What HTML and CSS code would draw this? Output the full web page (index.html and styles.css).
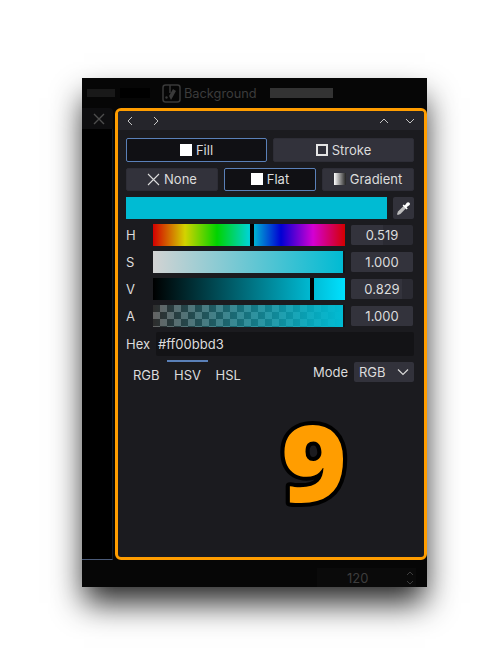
FILE: index.html
```html
<!DOCTYPE html>
<html lang="en">
<head>
    <meta charset="UTF-8">
    <meta name="viewport" content="width=device-width, initial-scale=1.0">
    <title>Color Picker</title>
    <link rel="stylesheet" href="styles.css">
</head>
<body>
    <div class="window">
        <div class="titlebar">
            <span class="blur-mark"></span>
            <span class="black-mark"></span>
            <svg class="doc-icon" width="19" height="19" viewBox="0 0 19 19" fill="none" stroke="#3a3a3a" stroke-width="1.5">
                <rect x="1" y="1" width="17" height="17" rx="2.5"/>
                <path d="M8 1v8"/>
                <path d="M9 16l5-9-3-2-4 7z" fill="#3a3a3a" stroke="none"/>
                <circle cx="4.5" cy="13.5" r="1.2" fill="#3a3a3a" stroke="none"/>
            </svg>
            <span class="doc-name">Background</span>
            <span class="grey-mark"></span>
        </div>
        <div class="middle">
            <div class="sidebar">
                <div class="side-tab">
                    <svg width="12" height="12" viewBox="0 0 12 12" fill="none" stroke="#4d4d4d" stroke-width="1.4"><path d="M1 1l10 10M11 1L1 11"/></svg>
                </div>
                <div class="side-body"></div>
            </div>
            <section class="panel">
                <div class="panel-toolbar">
                    <div class="nav-group">
                        <svg class="chev" width="8" height="10" viewBox="0 0 8 10"><path d="M6 1L2 5l4 4"/></svg>
                        <svg class="chev" width="8" height="10" viewBox="0 0 8 10"><path d="M2 1l4 4-4 4"/></svg>
                    </div>
                    <div class="nav-group nav-right">
                        <svg class="chev" width="10" height="8" viewBox="0 0 10 8"><path d="M1 6l4-4 4 4"/></svg>
                        <svg class="chev" width="10" height="8" viewBox="0 0 10 8"><path d="M1 2l4 4 4-4"/></svg>
                    </div>
                </div>
                <div class="panel-body">
                    <div class="btn-row row-a">
                        <button class="btn active"><span class="sq"></span>Fill</button>
                        <button class="btn"><span class="sq hollow"></span>Stroke</button>
                    </div>
                    <div class="btn-row row-b">
                        <button class="btn">
                            <svg width="13" height="13" viewBox="0 0 13 13" fill="none" stroke="#dcdcdc" stroke-width="1.1"><path d="M1 1l11 11M12 1L1 12"/></svg>None
                        </button>
                        <button class="btn active"><span class="sq"></span>Flat</button>
                        <button class="btn"><span class="sq grad"></span>Gradient</button>
                    </div>
                    <div class="swatch-row">
                        <div class="swatch"></div>
                        <button class="pick">
                            <svg width="15" height="15" viewBox="0 0 15 15">
                                <path d="M8.4 4.2l2.4 2.4-6.4 6.4-2.6 1-.8-.8 1-2.6z" fill="#bdbdbd"/>
                                <path d="M7.6 3.4l1.2 1.2 2-2.8c.8-.9 1.9-.8 2.6-.1s.8 1.8-.1 2.6l-2.8 2 1.2 1.2-1 1-4.100-4.100z" fill="#fff"/>
                            </svg>
                        </button>
                    </div>
                    <div class="slider-row">
                        <label>H</label>
                        <div class="bar bar-h"><i class="thumb thumb-h"></i></div>
                        <div class="val"><span class="val-fill" style="width: 51.9%"></span><span class="val-text">0.519</span></div>
                    </div>
                    <div class="slider-row">
                        <label>S</label>
                        <div class="bar bar-s"><i class="thumb thumb-end"></i></div>
                        <div class="val"><span class="val-fill" style="width: 100%"></span><span class="val-text">1.000</span></div>
                    </div>
                    <div class="slider-row">
                        <label>V</label>
                        <div class="bar bar-v"><i class="thumb thumb-v"></i></div>
                        <div class="val"><span class="val-fill" style="width: 82.9%"></span><span class="val-text">0.829</span></div>
                    </div>
                    <div class="slider-row">
                        <label>A</label>
                        <div class="bar bar-a"><i class="thumb thumb-end"></i></div>
                        <div class="val"><span class="val-fill" style="width: 100%"></span><span class="val-text">1.000</span></div>
                    </div>
                    <div class="hex-row">
                        <label>Hex</label>
                        <div class="hex-input">#ff00bbd3</div>
                    </div>
                    <div class="mode-row">
                        <div class="tabs">
                            <span class="tab">RGB</span>
                            <span class="tab current">HSV</span>
                            <span class="tab">HSL</span>
                        </div>
                        <div class="mode">
                            <span class="mode-label">Mode</span>
                            <div class="select">RGB
                                <svg width="12" height="8" viewBox="0 0 12 8" fill="none" stroke="#d8d8d8" stroke-width="1.2"><path d="M1 1.500l5 5 5-5"/></svg>
                            </div>
                        </div>
                    </div>
                </div>
                <svg class="big-number" width="100" height="170" viewBox="0 0 100 170"><text transform="translate(13 126) scale(1.05 1)">9</text></svg>
            </section>
        </div>
        <div class="footer">
            <div class="spin">120
                <svg width="8" height="16" viewBox="0 0 8 16" fill="none" stroke="#3d3d3d" stroke-width="1"><path d="M1 5l3-3 3 3M1 11l3 3 3-3"/></svg>
            </div>
        </div>
    </div>
</body>
</html>
```

FILE: styles.css
```css
html, body {
    margin: 0;
    height: 100%;
    background: #fff;
    overflow: hidden;
}
body {
    font-family: Inter, "Liberation Sans", sans-serif;
    font-size: 13px;
    color: #dcdcdc;
}
button {
    font: inherit;
    color: inherit;
}
.window {
    width: 345px;
    height: 509px;
    margin: 78px 0 0 82px;
    background: #060606;
    box-shadow: 0 18px 30px -2px rgba(0, 0, 0, 0.85);
    display: flex;
    flex-direction: column;
}
.titlebar {
    height: 30px;
    display: flex;
    align-items: center;
    flex: none;
    box-sizing: border-box;
    padding-left: 5px;
}
.blur-mark {
    width: 28px;
    height: 8px;
    background: #191919;
}
.black-mark {
    width: 30px;
    height: 10px;
    margin-left: 5px;
    background: #000;
}
.doc-icon {
    margin-left: 12px;
}
.doc-name {
    margin-left: 3px;
    font-size: 12.8px;
    color: #3c3c3c;
}
.grey-mark {
    width: 63px;
    height: 10px;
    margin-left: 13px;
    background: #333;
}
.middle {
    flex: 1;
    display: flex;
    min-height: 0;
}
.sidebar {
    width: 31px;
    margin-right: 2px;
    display: flex;
    flex-direction: column;
}
.side-tab {
    height: 21px;
    background: #0e0e10;
    border-top-right-radius: 4px;
    display: flex;
    align-items: center;
    justify-content: center;
    padding-left: 3px;
}
.side-body {
    flex: 1;
    background: #000;
    border-right: 1px solid #0f1a2a;
    border-bottom: 1px solid #4a5a78;
}
.panel {
    flex: 1;
    position: relative;
    box-sizing: border-box;
    border: 3px solid #ff9d00;
    border-radius: 6px;
    background: #1b1b1f;
    display: flex;
    flex-direction: column;
}
.panel-toolbar {
    height: 19px;
    flex: none;
    background: #25252b;
    border-radius: 3px 3px 0 0;
    display: flex;
    justify-content: space-between;
    align-items: center;
    padding: 0 9px 0 8px;
}
.nav-group {
    display: flex;
    align-items: center;
    gap: 18px;
}
.nav-right {
    gap: 16px;
}
.chev {
    fill: none;
    stroke: #c4c4c4;
    stroke-width: 1;
}
.panel-body {
    padding: 8px 10px 0 8px;
}
.btn-row {
    display: flex;
    gap: 6px;
    margin-bottom: 6px;
}
.btn {
    flex: 1;
    box-sizing: border-box;
    border: 1px solid #2d2d36;
    border-radius: 2px;
    background: #32323b;
    display: flex;
    align-items: center;
    justify-content: center;
    gap: 4px;
    padding: 0;
}
.row-a .btn {
    height: 24px;
}
.row-b .btn {
    height: 23px;
    padding-bottom: 1px;
}
.btn.active {
    background: #101014;
    border-color: #5a80b8;
}
.sq {
    width: 12px;
    height: 12px;
    background: #fff;
}
.sq.hollow {
    box-sizing: border-box;
    background: transparent;
    border: 2px solid #e4e4e4;
}
.sq.grad {
    background: linear-gradient(to right, #fff, #222);
}
.swatch-row {
    display: flex;
    gap: 6px;
    margin-top: 5px;
    margin-bottom: 5px;
}
.swatch {
    flex: 1;
    height: 22px;
    background: #00bbd3;
}
.pick {
    width: 21px;
    height: 22px;
    border: 0;
    border-radius: 2px;
    background: #32323b;
    padding: 0;
    display: flex;
    align-items: center;
    justify-content: center;
}
.slider-row {
    display: flex;
    align-items: center;
    height: 22px;
    margin-bottom: 5px;
}
.slider-row label {
    width: 27px;
    flex: none;
}
.bar {
    position: relative;
    width: 192px;
    height: 22px;
    flex: none;
}
.thumb {
    position: absolute;
    top: 0;
    bottom: 0;
    background: #000;
}
.thumb-h {
    left: 97px;
    width: 4px;
}
.thumb-v {
    left: 157px;
    width: 4px;
}
.thumb-end {
    right: 0;
    width: 2px;
    background: #131316;
}
.bar-h {
    background: linear-gradient(to right, #d30000, #d3d300 16.67%, #00d300 33.33%, #00d3d3 50%, #0000d3 66.67%, #d300d3 83.33%, #d30000);
}
.bar-s {
    background: linear-gradient(to right, #d3d3d3, #00bbd3 99%);
}
.bar-v {
    background: linear-gradient(to right, #000, #00e1ff);
}
.bar-a {
    background: linear-gradient(to right, transparent, #00bbd3 99%), repeating-conic-gradient(#636363 0 25%, #2d2d2d 0 50%) 0 0 / 14px 14px;
}
.val {
    position: relative;
    width: 62px;
    height: 20px;
    margin-left: 6px;
    box-sizing: border-box;
    background: #2b2b33;
    border-radius: 2px;
    text-align: center;
    line-height: 20px;
    overflow: hidden;
}
.val-fill {
    position: absolute;
    top: 0;
    bottom: 0;
    left: 0;
    background: #33333c;
}
.val-text {
    position: relative;
}
.hex-row {
    display: flex;
    align-items: center;
    height: 24px;
}
.hex-row label {
    width: 30px;
    flex: none;
}
.hex-input {
    flex: 1;
    height: 24px;
    line-height: 24px;
    background: #131316;
    border-radius: 2px;
    padding-left: 2px;
}
.mode-row {
    display: flex;
    justify-content: space-between;
    margin-top: 4px;
}
.tabs {
    display: flex;
    gap: 14.5px;
    padding-left: 7px;
}
.tab {
    position: relative;
    padding-top: 6px;
    line-height: 18px;
}
.tab.current::before {
    content: "";
    position: absolute;
    top: 0;
    left: -7px;
    right: -7px;
    height: 2px;
    background: #5a80b8;
}
.mode {
    display: flex;
    align-items: center;
    gap: 6px;
    margin-top: 2px;
    height: 20px;
}
.select {
    width: 60px;
    height: 20px;
    box-sizing: border-box;
    background: #32323b;
    border-radius: 2px;
    padding: 0 5px;
    display: flex;
    align-items: center;
    justify-content: space-between;
}
.big-number {
    position: absolute;
    left: 150px;
    top: 265px;
    font-family: "Noto Sans", sans-serif;
    font-weight: 900;
    font-size: 107px;
    fill: #ff9d00;
    stroke: #000;
    stroke-width: 8px;
    stroke-linejoin: round;
    paint-order: stroke fill;
}
.footer {
    height: 27px;
    flex: none;
    display: flex;
    justify-content: flex-end;
}
.spin {
    width: 99px;
    height: 19px;
    margin: 8px 11px 0 0;
    background: #0a0a0a;
    box-sizing: border-box;
    color: #3d3d3d;
    display: flex;
    align-items: center;
    justify-content: space-between;
    padding: 0 2px 0 30px;
}
```
